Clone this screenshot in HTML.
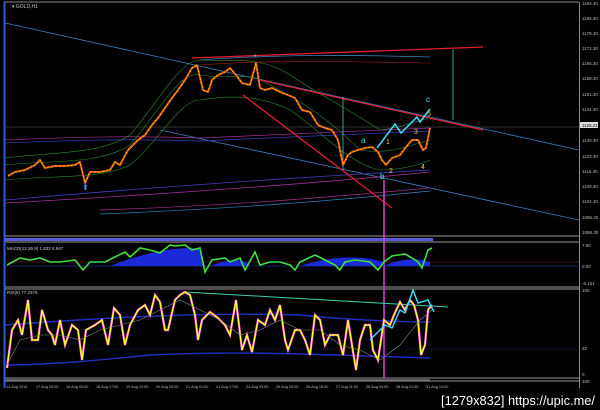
<!DOCTYPE html><html><head><meta charset="utf-8"><style>
html,body{margin:0;padding:0;background:#000;width:600px;height:410px;overflow:hidden}
svg{display:block}
text{font-family:"Liberation Sans",sans-serif}
</style></head><body>
<svg width="600" height="410" viewBox="0 0 600 410" xmlns="http://www.w3.org/2000/svg">
<rect width="600" height="410" fill="#000"/>
<line x1="4" y1="2" x2="579" y2="2" stroke="#888" stroke-width="1"/>
<line x1="4.5" y1="2" x2="4.5" y2="388" stroke="#2a5fd8" stroke-width="2"/>
<line x1="579.5" y1="2" x2="579.5" y2="388" stroke="#888" stroke-width="1"/>
<line x1="5" y1="236" x2="579" y2="236" stroke="#999"/>
<rect x="5" y="238" width="428" height="3" fill="#5a5ad8"/>
<line x1="5" y1="242" x2="579" y2="242" stroke="#999"/>
<line x1="5" y1="287" x2="579" y2="287" stroke="#999"/>
<line x1="5" y1="289" x2="579" y2="289" stroke="#999"/>
<line x1="5" y1="378" x2="579" y2="378" stroke="#999"/>
<rect x="5" y="379" width="425" height="2" fill="#555"/>
<line x1="5" y1="381" x2="579" y2="381" stroke="#999"/>
<text x="12" y="8" fill="#ccc" font-size="5">▾ GOLD,H1</text>
<g fill="#bbb" font-size="4.5">
<text x="582" y="5">1193.30</text><text x="582" y="20">1186.30</text><text x="582" y="35">1179.30</text><text x="582" y="50">1172.30</text><text x="582" y="65">1165.30</text><text x="582" y="80">1158.30</text><text x="582" y="96">1151.30</text><text x="582" y="111">1144.30</text><text x="582" y="142">1130.30</text><text x="582" y="158">1123.30</text><text x="582" y="173">1116.30</text><text x="582" y="188">1109.30</text><text x="582" y="203">1102.30</text><text x="582" y="219">1095.30</text><text x="582" y="234">1088.30</text><text x="582" y="247">7.90</text><text x="582" y="268">0.00</text><text x="582" y="285">-6.151</text><text x="582" y="292">100</text><text x="582" y="350">32</text><text x="582" y="376">0</text><text x="582" y="383">100</text>
</g>
<rect x="580" y="122" width="18" height="6" fill="#ddd"/><text x="582" y="127" font-size="4.5" fill="#000">1126.21</text>
<g fill="#bbb" font-size="3.8">
<text x="6" y="388">14 Aug 2015</text><text x="36" y="388">17 Aug 03:00</text><text x="66" y="388">18 Aug 00:00</text><text x="96" y="388">18 Aug 17:00</text><text x="126" y="388">19 Aug 10:00</text><text x="156" y="388">20 Aug 03:00</text><text x="186" y="388">21 Aug 01:00</text><text x="216" y="388">21 Aug 17:00</text><text x="246" y="388">24 Aug 03:00</text><text x="276" y="388">25 Aug 03:00</text><text x="306" y="388">26 Aug 18:00</text><text x="336" y="388">27 Aug 11:00</text><text x="366" y="388">28 Aug 04:00</text><text x="396" y="388">28 Aug 21:00</text><text x="426" y="388">31 Aug 14:00</text>
</g>
<line x1="5" y1="127" x2="579" y2="127" stroke="#666" stroke-width="0.6"/>
<line x1="5" y1="23" x2="579" y2="150" stroke="#3a7fc0" stroke-width="0.8"/>
<line x1="160" y1="130" x2="579" y2="220" stroke="#3a7fc0" stroke-width="0.8"/>
<path d="M5 200 C120 190 250 180 430 170" stroke="#4040c0" fill="none" stroke-width="0.8"/>
<path d="M5 203 C150 195 300 185 430 172" stroke="#a03090" fill="none" stroke-width="0.8"/>
<path d="M5 140 C60 138 120 135 200 138 C260 135 330 132 430 128" stroke="#a03090" fill="none" stroke-width="0.7"/>
<path d="M5 143 C60 141 120 138 200 141 C260 138 330 135 430 131" stroke="#4040c0" fill="none" stroke-width="0.7"/>
<path d="M200 60 C280 54 360 55 430 57" stroke="#3a7fc0" fill="none" stroke-width="0.8"/>
<path d="M200 65 C280 59 360 62 430 63" stroke="#a02020" fill="none" stroke-width="0.6"/>
<path d="M100 210 C250 205 350 195 430 188" stroke="#a03090" fill="none" stroke-width="0.7"/>
<path d="M100 214 C250 208 350 199 430 191" stroke="#3a7fc0" fill="none" stroke-width="0.7"/>
<path d="M5 165 C50 160 100 165 130 145 C160 110 180 70 200 75 C230 80 250 70 270 85 C300 100 330 120 360 150 C390 155 410 145 430 140" stroke="#2a8a2a" fill="none" stroke-width="0.6"/>
<path d="M5 180 C50 175 100 180 130 165 C160 140 180 100 200 100 C230 95 260 95 290 110 C320 130 350 165 380 170 C400 170 420 165 430 160" stroke="#2a8a2a" fill="none" stroke-width="0.6"/>
<path d="M5 158 C50 152 100 155 130 135 C160 100 180 60 200 60 C230 62 260 55 290 75 C320 95 350 110 380 130 C400 128 420 120 430 118" stroke="#2a8a2a" fill="none" stroke-width="0.6"/>
<line x1="192" y1="58" x2="483" y2="47" stroke="#e02030" stroke-width="1.3"/>
<line x1="260" y1="80" x2="483" y2="130" stroke="#e02030" stroke-width="1.3"/>
<line x1="243" y1="95" x2="392" y2="208" stroke="#e02030" stroke-width="1.3"/>
<line x1="343" y1="97" x2="343" y2="170" stroke="#40d0b0" stroke-width="0.8"/>
<line x1="453" y1="49" x2="453" y2="120" stroke="#40d0b0" stroke-width="0.8"/>
<polyline fill="none" stroke="#e05a10" stroke-width="2" stroke-linejoin="round" points="8,176 15,172 25,170 35,165 40,160 45,168 55,166 65,166 75,165 80,162 85,183 90,172 100,172 110,170 115,162 120,165 128,150 133,145 138,140 145,135 152,125 158,118 165,108 172,98 178,90 185,80 192,68 197,65 203,90 208,92 212,80 218,75 225,72 230,68 236,75 242,83 250,85 256,63 260,88 265,90 272,88 280,92 288,95 295,98 302,110 310,112 318,125 325,128 332,130 338,140 343,165 348,155 352,152 358,150 365,148 372,147 378,152 382,160 386,165 392,158 400,155 406,147 412,140 418,140 423,150 426,148 430,128"/>
<polyline fill="none" stroke="#ffd000" stroke-width="0.8" stroke-dasharray="2 2" points="8,176 15,172 25,170 35,165 40,160 45,168 55,166 65,166 75,165 80,162 85,183 90,172 100,172 110,170 115,162 120,165 128,150 133,145 138,140 145,135 152,125 158,118 165,108 172,98 178,90 185,80 192,68 197,65 203,90 208,92 212,80 218,75 225,72 230,68 236,75 242,83 250,85 256,63 260,88 265,90 272,88 280,92 288,95 295,98 302,110 310,112 318,125 325,128 332,130 338,140 343,165 348,155 352,152 358,150 365,148 372,147 378,152 382,160 386,165 392,158 400,155 406,147 412,140 418,140 423,150 426,148 430,128"/>
<text x="82" y="190" fill="#4a90ff" font-size="8">⬆</text>
<text x="253" y="58" fill="#8ab0ff" font-size="7">+</text>
<polyline fill="none" stroke="#40e0ff" stroke-width="1.5" points="377,148 395,124 401,133 417,117 420,122 430,109"/>
<text x="361" y="143" fill="#40e0ff" font-size="8">a</text>
<text x="380" y="179" fill="#40e0ff" font-size="8">b</text>
<text x="426" y="102" fill="#40e0ff" font-size="8">c</text>
<g fill="#e8d040" font-size="7"><text x="386" y="144">1</text><text x="389" y="173">2</text><text x="414" y="134">3</text><text x="421" y="169">4</text><text x="427" y="116">5</text></g>
<line x1="384" y1="180" x2="384" y2="378" stroke="#e040e0" stroke-width="1.5"/>
<text x="7" y="250" fill="#ccc" font-size="4.5">MACD(12,26,9) 1.832 6.947</text>
<line x1="5" y1="266" x2="579" y2="266" stroke="#2040c0" stroke-width="0.6"/>
<line x1="5" y1="262" x2="579" y2="262" stroke="#802020" stroke-width="0.5"/>
<path d="M110 266 C150 250 190 245 200 250 L205 266 Z M210 266 C230 258 245 258 250 266 Z M300 266 C330 256 360 255 384 262 L384 266 Z M384 266 C400 258 420 258 430 262 L430 266Z" fill="#1a2ad8"/>
<polyline fill="none" stroke="#40e040" stroke-width="1.6" points="7,265 20,258 30,260 40,258 50,262 60,262 75,260 83,270 90,262 105,262 115,257 125,252 130,257 140,248 150,250 160,253 170,245 175,246 185,245 192,250 200,248 205,272 212,260 225,258 230,262 240,258 245,270 255,252 260,265 270,262 280,262 290,265 295,270 300,262 315,255 325,260 335,265 340,270 345,262 355,260 370,262 378,270 384,262 392,256 398,255 405,254 412,258 418,262 422,268 428,250 432,248"/>
<text x="7" y="294" fill="#ccc" font-size="4.5">RSI(8) 77.2376</text>
<line x1="185" y1="292" x2="448" y2="307" stroke="#40d0b0" stroke-width="1"/>
<path d="M5 325 C100 318 200 312 300 315 C350 320 400 322 430 322" stroke="#2030c0" fill="none" stroke-width="1.4"/>
<path d="M5 365 C50 365 100 360 150 355 C250 350 350 356 430 358" stroke="#2030c0" fill="none" stroke-width="1.4"/>
<line x1="5" y1="349" x2="579" y2="349" stroke="#2030a0" stroke-width="0.5" stroke-dasharray="1 1"/>
<polyline fill="none" stroke="#e030e0" stroke-width="2.4" points="7,368 12,330 18,320 22,335 28,300 32,340 38,340 42,310 48,330 52,335 55,345 60,320 65,345 72,325 78,330 82,360 86,330 95,325 102,320 108,345 114,308 120,315 125,345 130,325 138,310 145,305 150,315 155,295 160,302 165,330 168,330 175,300 180,295 185,292 190,295 195,315 198,340 202,320 210,312 218,318 225,325 230,335 236,300 242,350 247,335 252,352 258,320 265,325 270,310 275,320 280,305 285,340 288,350 295,330 300,330 305,340 310,355 315,315 320,320 325,345 330,335 338,335 343,355 348,320 352,345 356,370 360,340 365,325 370,325 373,350 378,360 384,320 390,325 394,315 400,302 405,310 410,300 414,305 418,320 421,355 425,345 428,310 432,305"/>
<polyline fill="none" stroke="#ffff30" stroke-width="1.4" points="7,368 12,330 18,320 22,335 28,300 32,340 38,340 42,310 48,330 52,335 55,345 60,320 65,345 72,325 78,330 82,360 86,330 95,325 102,320 108,345 114,308 120,315 125,345 130,325 138,310 145,305 150,315 155,295 160,302 165,330 168,330 175,300 180,295 185,292 190,295 195,315 198,340 202,320 210,312 218,318 225,325 230,335 236,300 242,350 247,335 252,352 258,320 265,325 270,310 275,320 280,305 285,340 288,350 295,330 300,330 305,340 310,355 315,315 320,320 325,345 330,335 338,335 343,355 348,320 352,345 356,370 360,340 365,325 370,325 373,350 378,360 384,320 390,325 394,315 400,302 405,310 410,300 414,305 418,320 421,355 425,345 428,310 432,305"/>
<polyline fill="none" stroke="#888" stroke-width="0.6" points="7,365 20,340 40,335 60,335 80,340 100,330 120,325 140,320 160,310 180,300 200,310 220,320 240,335 260,330 280,320 300,330 320,330 340,345 360,350 380,360 400,345 420,320 432,310"/>
<polyline fill="none" stroke="#40e0ff" stroke-width="1.4" points="370,340 385,325 392,328 400,310 405,313 413,290 418,303 428,300 434,312"/>
<text x="441" y="405" fill="#fff" font-size="13" font-family="Liberation Mono, monospace" textLength="154" lengthAdjust="spacingAndGlyphs">[1279x832] https://upic.me/</text>
</svg>
</body></html>
